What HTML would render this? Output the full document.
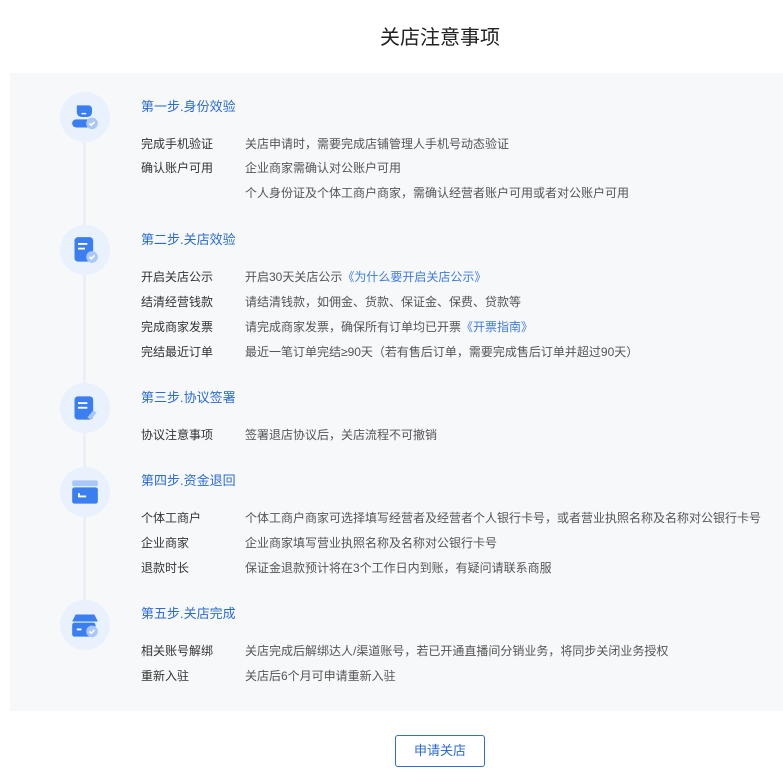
<!DOCTYPE html>
<html><head><meta charset="utf-8"><style>
*{margin:0;padding:0;box-sizing:border-box}
body{width:783px;height:782px;background:#fff;position:relative;overflow:hidden;font-family:"Liberation Sans","Noto Sans CJK SC",sans-serif;color:#333}
.t{position:absolute;white-space:nowrap;line-height:16px}
.h{position:absolute;left:141px;font-size:13px;color:#2a6bd6;line-height:18px;white-space:nowrap}
.l{left:141px;font-size:12px;color:#333}
.v{left:245px;font-size:12px;color:#555}
.a{color:#3e7be0}
.c{position:absolute;left:60px;width:50px;height:50px;border-radius:50%;background:#e9f1fd}
.c svg{position:absolute;left:11px;top:11px}
</style></head><body>
<div class="t" style="left:0;width:880px;text-align:center;top:26px;font-size:20px;line-height:24px;color:#222">关店注意事项</div>
<div style="position:absolute;left:10px;top:73px;width:773px;height:638px;background:#f7f8fa"></div>
<div style="position:absolute;left:83px;top:140px;width:3px;height:470px;background:#eceff5"></div>

<div class="c" style="top:92px"><svg width="28" height="28" viewBox="0 0 24 24"><path d="M5 2h10a3 3 0 0 1 3 3v3a4 4 0 0 1-4 4H9a4 4 0 0 1-4-4z" fill="#3b7ef0"/><rect x="9" y="8.5" width="4" height="1.2" fill="#fff"/><rect x="1" y="14" width="16" height="7" rx="3.5" fill="#3b7ef0"/><circle cx="18" cy="17.5" r="5" fill="#a9c8f8"/><path d="M15.8 17.5l1.6 1.5 2.8-2.8" stroke="#fff" stroke-width="1.4" fill="none"/></svg></div>
<div class="c" style="top:225px"><svg width="28" height="28" viewBox="0 0 24 24"><rect x="3" y="1" width="16" height="21" rx="3" fill="#3b7ef0"/><rect x="6" y="6" width="8" height="1.6" fill="#fff"/><rect x="6" y="10" width="6" height="1.6" fill="#fff"/><circle cx="18" cy="18" r="5" fill="#a9c8f8"/><path d="M15.8 18l1.6 1.5 2.8-2.8" stroke="#fff" stroke-width="1.4" fill="none"/></svg></div>
<div class="c" style="top:383px"><svg width="28" height="28" viewBox="0 0 24 24"><rect x="3" y="2" width="16" height="20" rx="3" fill="#3b7ef0"/><rect x="6" y="7" width="8" height="1.6" fill="#fff"/><rect x="6" y="11" width="8" height="1.6" fill="#fff"/><path d="M14 20l5-6 3 2-5 6z" fill="#a9c8f8"/></svg></div>
<div class="c" style="top:467px"><svg width="28" height="28" viewBox="0 0 24 24"><rect x="1" y="2" width="22" height="5" rx="1.5" fill="#a9c8f8"/><rect x="1" y="8" width="22" height="14" rx="2" fill="#3b7ef0"/><rect x="6" y="15" width="7" height="1.6" fill="#fff"/><rect x="6" y="13" width="1.6" height="3" fill="#fff"/></svg></div>
<div class="c" style="top:600px"><svg width="28" height="28" viewBox="0 0 24 24"><path d="M4 3h16l3 6H1z" fill="#3b7ef0"/><rect x="1" y="10" width="20" height="12" rx="2" fill="#3b7ef0"/><rect x="5" y="15" width="4" height="1.6" fill="#fff"/><circle cx="18" cy="17.5" r="5" fill="#a9c8f8"/><path d="M15.8 17.5l1.6 1.5 2.8-2.8" stroke="#fff" stroke-width="1.4" fill="none"/></svg></div>

<div class="h" style="top:98px">第一步.身份效验</div>
<div class="t l" style="top:136px">完成手机验证</div><div class="t v" style="top:136px">关店申请时，需要完成店铺管理人手机号动态验证</div>
<div class="t l" style="top:160px">确认账户可用</div><div class="t v" style="top:160px">企业商家需确认对公账户可用</div>
<div class="t v" style="top:185px">个人身份证及个体工商户商家，需确认经营者账户可用或者对公账户可用</div>

<div class="h" style="top:231px">第二步.关店效验</div>
<div class="t l" style="top:269px">开启关店公示</div><div class="t v" style="top:269px">开启30天关店公示<span class="a">《为什么要开启关店公示》</span></div>
<div class="t l" style="top:294px">结清经营钱款</div><div class="t v" style="top:294px">请结清钱款，如佣金、货款、保证金、保费、贷款等</div>
<div class="t l" style="top:319px">完成商家发票</div><div class="t v" style="top:319px">请完成商家发票，确保所有订单均已开票<span class="a">《开票指南》</span></div>
<div class="t l" style="top:344px">完结最近订单</div><div class="t v" style="top:344px">最近一笔订单完结≥90天（若有售后订单，需要完成售后订单并超过90天）</div>

<div class="h" style="top:389px">第三步.协议签署</div>
<div class="t l" style="top:427px">协议注意事项</div><div class="t v" style="top:427px">签署退店协议后，关店流程不可撤销</div>

<div class="h" style="top:472px">第四步.资金退回</div>
<div class="t l" style="top:510px">个体工商户</div><div class="t v" style="top:510px">个体工商户商家可选择填写经营者及经营者个人银行卡号，或者营业执照名称及名称对公银行卡号</div>
<div class="t l" style="top:535px">企业商家</div><div class="t v" style="top:535px">企业商家填写营业执照名称及名称对公银行卡号</div>
<div class="t l" style="top:560px">退款时长</div><div class="t v" style="top:560px">保证金退款预计将在3个工作日内到账，有疑问请联系商服</div>

<div class="h" style="top:605px">第五步.关店完成</div>
<div class="t l" style="top:643px">相关账号解绑</div><div class="t v" style="top:643px">关店完成后解绑达人/渠道账号，若已开通直播间分销业务，将同步关闭业务授权</div>
<div class="t l" style="top:668px">重新入驻</div><div class="t v" style="top:668px">关店后6个月可申请重新入驻</div>

<div style="position:absolute;left:395px;top:735px;width:90px;height:32px;border:1px solid #2f6fd0;border-radius:3px;text-align:center;line-height:30px;font-size:13px;color:#2a6bd6">申请关店</div>
</body></html>
